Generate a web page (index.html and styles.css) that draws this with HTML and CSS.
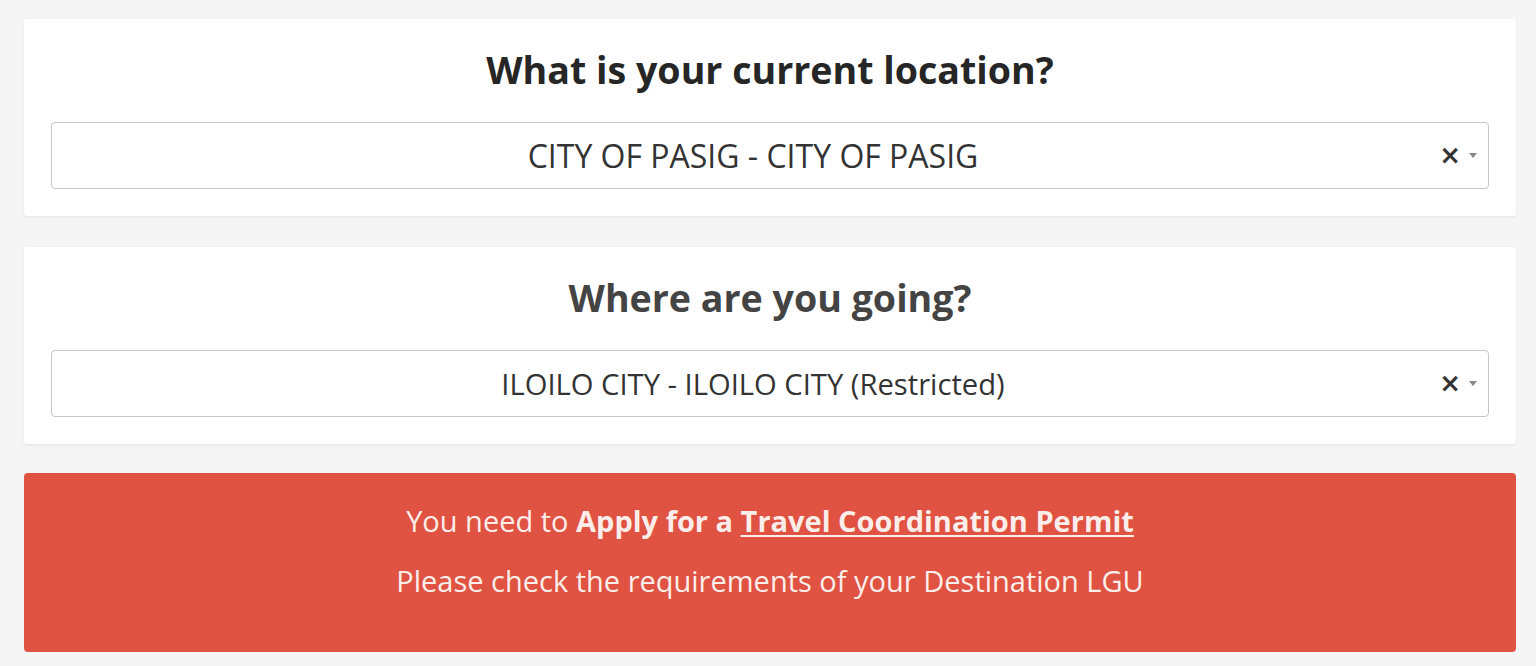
FILE: index.html
```html
<!DOCTYPE html>
<html lang="en">
<head>
<meta charset="utf-8">
<title>Travel</title>
<link rel="stylesheet" href="styles.css">
</head>
<body>
<main class="page">
  <section class="card">
    <h2 class="card-title">What is your current location?</h2>
    <div class="select">
      <span class="select-value">CITY OF PASIG - CITY OF PASIG</span>
      <span class="select-clear">×</span>
      <span class="select-arrow"></span>
    </div>
  </section>
  <section class="card">
    <h2 class="card-title card-title-muted">Where are you going?</h2>
    <div class="select">
      <span class="select-value select-value-small">ILOILO CITY - ILOILO CITY (Restricted)</span>
      <span class="select-clear">×</span>
      <span class="select-arrow"></span>
    </div>
  </section>
  <section class="alert">
    <p class="alert-line">You need to <strong>Apply for a <a class="alert-link" href="#">Travel Coordination Permit</a></strong></p>
    <p class="alert-line">Please check the requirements of your Destination LGU</p>
  </section>
</main>
</body>
</html>
```
FILE: styles.css
```css
html, body {
  margin: 0;
  padding: 0;
  background: #f5f5f5;
  font-family: "Open Sans", "Noto Sans", sans-serif;
}
.page {
  padding: 19px 20px 0 24px;
  display: flex;
  flex-direction: column;
  gap: 31px;
}
.card {
  background: #fff;
  border-radius: 3px;
  box-shadow: 0 1px 3px rgba(0, 0, 0, 0.07);
  padding: 29px 27px 27px;
  display: flex;
  flex-direction: column;
  gap: 30px;
}
.card + .alert {
  margin-top: -2px;
}
.card-title {
  margin: 0;
  text-align: center;
  font-size: 37.6px;
  line-height: 44px;
  font-weight: 700;
  color: #262626;
}
.card-title-muted {
  color: #444;
}
.select {
  position: relative;
  height: 65px;
  border: 1px solid #c6c6c6;
  border-radius: 4px;
  padding-right: 34px;
  display: flex;
  align-items: center;
  justify-content: center;
}
.select-value {
  font-size: 32px;
  color: #333;
}
.select-value-small {
  font-size: 29.2px;
}
.select-clear {
  position: absolute;
  right: 27px;
  top: 50%;
  transform: translateY(-52%);
  font-size: 26px;
  font-weight: 700;
  color: #333;
  font-family: "DejaVu Sans", sans-serif;
}
.select-arrow {
  position: absolute;
  right: 11px;
  top: 50%;
  margin-top: -3px;
  width: 0;
  height: 0;
  border-left: 4px solid transparent;
  border-right: 4px solid transparent;
  border-top: 5px solid #888;
}
.alert {
  background: #e05241;
  border-radius: 4px;
  padding: 26px 20px 33px;
  text-align: center;
  color: #fbeeea;
}
.alert-line {
  margin: 0 0 16px;
  font-size: 29px;
  line-height: 44px;
}
.alert-line strong {
  font-weight: 700;
}
.alert-link {
  color: #fbeeea;
  text-decoration: underline;
  text-underline-offset: 3px;
  text-decoration-thickness: 2px;
}
```
